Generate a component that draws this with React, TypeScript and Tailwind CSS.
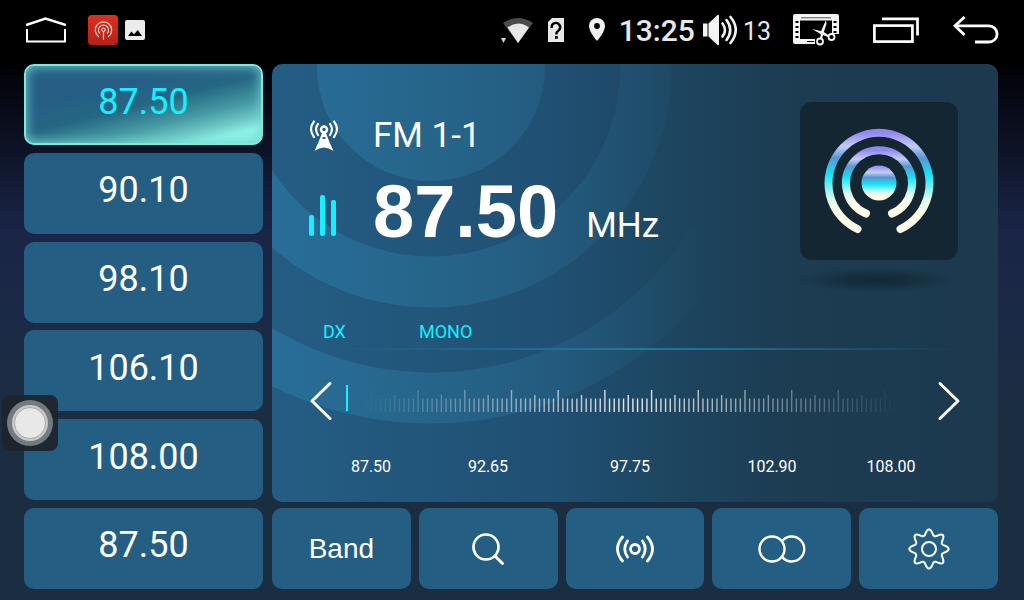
import React, { useState } from 'react'

interface Preset {
  id: number
  frequency: string
}

const PRESETS: Preset[] = [
  { id: 1, frequency: '87.50' },
  { id: 2, frequency: '90.10' },
  { id: 3, frequency: '98.10' },
  { id: 4, frequency: '106.10' },
  { id: 5, frequency: '108.00' },
  { id: 6, frequency: '87.50' }
]

const SCALE_LABELS = ['87.50', '92.65', '97.75', '102.90', '108.00']

// Outline of the settings cog: a wave with eight teeth round the centre
const GEAR_PATH =
  Array.from({ length: 192 }, (_, i) => {
    const a = (i / 192) * Math.PI * 2
    const r = 14 + 5.6 * Math.pow((1 + Math.cos(8 * a)) / 2, 1.2)
    return `${i ? 'L' : 'M'}${(21 + r * Math.sin(a)).toFixed(2)} ${(21 - r * Math.cos(a)).toFixed(2)}`
  }).join('') + 'Z'

const StatusBar = () => (
  <header className="flex h-15 items-center justify-between bg-black pr-[25px] pl-[26px] text-[#e8e8e8]">
    <div className="flex items-center">
      <button type="button" aria-label="Home" className="mr-[22px]">
        <svg width="40" height="26" viewBox="0 0 40 26" fill="none" stroke="#fff" strokeWidth="2">
          <path d="M0 8 L19.500 1.500 L40 8" strokeWidth="2.600" />
          <path d="M1 12 V24.500 H39 V12" />
        </svg>
      </button>
      <svg className="mr-[7px]" width="30" height="30" viewBox="0 0 30 30" fill="none" stroke="#f6d9d4" strokeLinecap="round">
        <defs>
          <linearGradient id="app" x1="0" y1="0" x2="0" y2="1">
            <stop offset="0" stopColor="#df2f1f" />
            <stop offset="1" stopColor="#b32218" />
          </linearGradient>
        </defs>
        <rect width="30" height="30" rx="3.500" fill="url(#app)" stroke="none" />
        <path d="M10.500 21.600 A8.200 8.200 0 1 1 20.500 21.600" strokeWidth="1.300" />
        <path d="M11.600 18.200 A5 5 0 1 1 19.400 18.200" strokeWidth="1.200" />
        <circle cx="15.500" cy="14.800" r="1.800" />
        <path d="M15.500 17 V24" strokeWidth="1.200" />
      </svg>
      <svg width="20" height="20" viewBox="0 0 20 20">
        <rect width="20" height="20" rx="2" fill="#ececec" />
        <path d="M3 16 L6.500 11.500 L9 14.200 L12.800 10 L17 16 Z" fill="#000" />
      </svg>
    </div>

    <div className="flex items-center">
      <svg className="mr-3.5" width="33" height="27" viewBox="0 0 33 27">
        <path d="M2 6 Q17 -4 32 6 L17 26 Z" fill="#4b4b4b" />
        <path d="M6.500 10.500 Q17 2.500 28 10.500 L17 26 Z" fill="#e8e8e8" />
        <path d="M0 21 H5 L2.500 26 Z" fill="#d8d8d8" />
      </svg>
      <svg className="mr-[25px]" width="16" height="26" viewBox="0 0 16 26">
        <path d="M4 1 H16 V25 H0 V5 Z" fill="#e8e8e8" />
        <path d="M3.800 11 A4.200 4.200 0 1 1 10.500 13.500 Q8.300 15 8.300 17.500" fill="none" stroke="#000" strokeWidth="2.400" />
        <rect x="7" y="19" width="2.800" height="2.800" fill="#000" />
      </svg>
      <svg className="mr-3.5" width="16" height="24" viewBox="0 0 16 24">
        <path d="M8 0 A8 8 0 0 1 16 8 C16 14 8 23 8 23 C8 23 0 14 0 8 A8 8 0 0 1 8 0 Z" fill="#f0f0f0" />
        <circle cx="8" cy="8" r="2.900" fill="#000" />
      </svg>
      <span className="mr-2 pt-0.5 text-[30px] leading-9 font-medium">13:25</span>
      <svg className="mr-1" width="36" height="32" viewBox="0 0 36 32">
        <rect x="0" y="9.500" width="4.500" height="13" fill="#f4f4f4" />
        <path d="M5.500 9.500 L14.500 1 Q16 0 16 2 V30 Q16 32 14.500 31 L5.500 22.500 Z" fill="#f4f4f4" />
        <g fill="none" stroke="#f4f4f4" strokeWidth="2.600" strokeLinecap="round">
          <path d="M19.500 9.500 Q24.500 16 19.500 22.500" />
          <path d="M23.500 6 Q31 16 23.500 26" />
          <path d="M27.500 3 Q38 16 27.500 29" />
        </g>
      </svg>
      <span className="mr-[22px] pt-1 text-[25px] leading-9">13</span>
      <button type="button" aria-label="Screenshot" className="mr-[34px]">
        <svg width="46" height="32" viewBox="0 0 46 32">
          <path d="M2 0 H44 Q46 0 46 2 V20 H39 V6.500 H7 V25 H22 V30 H2 Q0 30 0 28 V2 Q0 0 2 0 Z" fill="#f4f4f4" />
          <path d="M8 3.800 H38" stroke="#555" />
          <g fill="#000">
            <rect x="2.500" y="7" width="3" height="2" />
            <rect x="2.500" y="12" width="3" height="2" />
            <rect x="2.500" y="17" width="3" height="2" />
            <rect x="2.500" y="22" width="3" height="2" />
            <rect x="40.500" y="7" width="3" height="2" />
            <rect x="40.500" y="12" width="3" height="2" />
            <rect x="40.500" y="17" width="3" height="2" />
            <rect x="14" y="27" width="7" height="1" />
          </g>
          <path d="M19 15 L30 17.500 L36 21.500 L35 23 L28.500 20.500 Z" fill="#f4f4f4" />
          <path d="M33 6 L33.500 10 L30.500 19 L29 25 L27 24.500 L28.500 16 Z" fill="#f4f4f4" />
          <g fill="#000" stroke="#f4f4f4" strokeWidth="1.800">
            <circle cx="27" cy="27.500" r="3" />
            <circle cx="38.500" cy="23" r="3" />
          </g>
        </svg>
      </button>
      <button type="button" aria-label="Recent apps" className="mr-[34px]">
        <svg width="46" height="26" viewBox="0 0 46 26" fill="none" stroke="#fff" strokeWidth="2.700">
          <rect x="1.400" y="8.600" width="38" height="16" />
          <path d="M9 1.800 H44.500 V18.500" />
        </svg>
      </button>
      <button type="button" aria-label="Back">
        <svg width="46" height="28" viewBox="0 0 46 28" fill="none" stroke="#fff" strokeWidth="2.800">
          <path d="M11.500 1 L2 9.800 L11.500 19" />
          <path d="M2 9.800 H36 A8 8 0 0 1 36 26 H22" />
        </svg>
      </button>
    </div>
  </header>
)

const PresetButton = ({ preset, active, onSelect }: { preset: Preset; active: boolean; onSelect: (id: number) => void }) => (
  <button
    type="button"
    aria-pressed={active}
    onClick={() => onSelect(preset.id)}
    className={
      active
        ? 'h-[81px] rounded-[10px] border-2 border-[#7fe8de] bg-[linear-gradient(166deg,#265e86_30%,#256783_50%,#479aa4_68%,#6fc8c6_80%,#8df0e6_88%)] pb-1.5 text-4xl text-[#14f0ff] shadow-[inset_0_0_12px_#6fd5d0]'
        : 'h-[81px] rounded-[10px] bg-[#255e83] pb-1.5 text-4xl text-white'
    }
  >
    {preset.frequency}
  </button>
)

// Broadcast rings behind the readout
const Rings = () => (
  <svg className="absolute top-0 left-0" width="726" height="438" viewBox="0 0 726 438" fill="none" aria-hidden="true">
    <defs>
      <linearGradient id="ring" gradientUnits="userSpaceOnUse" x1="0" y1="0" x2="440" y2="0">
        <stop offset="0" stopColor="#2a7aa6" stopOpacity="0.600" />
        <stop offset="0.400" stopColor="#2a7096" stopOpacity="0.550" />
        <stop offset="1" stopColor="#2a7096" stopOpacity="0" />
      </linearGradient>
    </defs>
    <circle cx="159" cy="3" r="114" fill="url(#ring)" />
    <circle cx="159" cy="3" r="215" stroke="url(#ring)" strokeWidth="51" />
    <circle cx="159" cy="3" r="331" stroke="url(#ring)" strokeWidth="51" />
  </svg>
)

const StationLogo = () => (
  <div className="mr-10 flex flex-col items-center">
    <div className="flex size-[158px] items-center justify-center rounded-xl bg-[#132632] pt-1">
      <svg width="112" height="112" viewBox="-56 -56 112 112" fill="none" strokeLinecap="round">
        <defs>
          <linearGradient id="shine" x1="0" y1="0" x2="0" y2="1">
            <stop offset="0" stopColor="#9188ee" />
            <stop offset="0.140" stopColor="#c3cdf6" />
            <stop offset="0.260" stopColor="#5796d3" />
            <stop offset="0.440" stopColor="#14e6f6" />
            <stop offset="0.700" stopColor="#e6faec" />
            <stop offset="0.850" stopColor="#fdfbe9" />
          </linearGradient>
          <linearGradient id="shine-dot" x1="0" y1="0" x2="0" y2="1">
            <stop offset="0" stopColor="#9188ee" />
            <stop offset="0.200" stopColor="#c3cdf6" />
            <stop offset="0.340" stopColor="#5796d3" />
            <stop offset="0.540" stopColor="#14e6f6" />
            <stop offset="0.780" stopColor="#e6faec" />
            <stop offset="0.900" stopColor="#fdfbe9" />
          </linearGradient>
        </defs>
        <path d="M-21.500 46 A50.500 50.500 0 1 1 21.500 46" stroke="url(#shine)" strokeWidth="8" />
        <path d="M-13 30.500 A33 33 0 1 1 13 30.500" stroke="url(#shine)" strokeWidth="8" />
        <circle r="17.500" fill="url(#shine-dot)" />
      </svg>
    </div>
    <div className="mt-2 h-6 w-[158px] bg-[radial-gradient(closest-side,#142733,#16303f_50%,transparent)]" />
  </div>
)

// Tuning scale: one tick every 4.67px, every tenth is long and every fifth is medium
const Ruler = () => {
  const ticks = Array.from({ length: 118 }, (_, i) => ({ x: 7 + i * 4.67, n: i + 6 }))
  return (
    <svg className="mx-3 min-w-0 flex-1" height="40" viewBox="0 0 580 40" preserveAspectRatio="none" role="img" aria-label="Tuning scale">
      <rect x="1" y="4" width="2" height="26" fill="#14f0ff" />
      {ticks.map(({ x, n }) => {
        const top = n % 10 === 0 ? 9 : n % 5 === 0 ? 14 : 17.5
        const opacity = Math.max(0, 0.9 - Math.abs(x - 285) / 300)
        return <rect key={n} x={x} y={top} width="1.400" height={31 - top} fill="#fff" opacity={opacity} />
      })}
    </svg>
  )
}

const TunerPanel = ({ frequency }: { frequency: string }) => (
  <section className="relative flex-1 overflow-hidden rounded-[10px] bg-[linear-gradient(90deg,#245d84,#205073_38%,#1d455f_56%,#1c3c52_72%,#1c394e)] text-white">
    <Rings />
    <div className="relative flex justify-between pt-[38px] pl-[37px]">
      <div className="pt-3.5">
        <div className="flex h-10 items-center">
          <svg className="mr-[34px]" width="30" height="32" viewBox="0 0 30 32" fill="none" stroke="#fff" strokeWidth="2.200" strokeLinecap="round">
            <path d="M5 1.500 Q-1 9 5 17" />
            <path d="M9 4 Q5 9 9 15" />
            <path d="M25 1.500 Q31 9 25 17" />
            <path d="M21 4 Q25 9 21 15" />
            <circle cx="15" cy="9.500" r="3" strokeWidth="2.600" />
            <path d="M13 13 H17 L20 21 L24.500 31 Q15 24 5.500 31 L10 21 Z" fill="#fff" stroke="none" />
            <rect x="13.300" y="17" width="3.400" height="2" rx="1" fill="#25648c" stroke="none" />
          </svg>
          <span className="text-[35px] leading-10">FM 1-1</span>
        </div>
        <div className="mt-5 flex items-baseline">
          <svg className="mr-9" width="28" height="42" viewBox="0 0 28 42" fill="#14f0ff">
            <rect x="0" y="20" width="5" height="21" rx="2" />
            <rect x="11" y="0" width="5" height="41" rx="2" />
            <rect x="22" y="5" width="5" height="36" rx="2" />
          </svg>
          <span className="font-['Liberation_Sans',sans-serif] text-[74px] leading-[72px] font-bold">{frequency}</span>
          <span className="ml-7 text-[35px] leading-10">MHz</span>
        </div>
      </div>
      <StationLogo />
    </div>

    <div className="relative mt-7 flex pl-[51px] text-lg leading-6 text-[#14f0ff]">
      <span className="w-24">DX</span>
      <span>MONO</span>
    </div>
    <div className="relative mt-1 mr-10 ml-[60px] h-0.5 bg-[linear-gradient(90deg,transparent,#22759c_45%,#22759c_55%,transparent)]" />

    <div className="relative mt-[31px] flex items-center pr-[37px] pl-[37px]">
      <button type="button" aria-label="Tune down">
        <svg width="24" height="40" viewBox="0 0 24 40" fill="none" stroke="#fff" strokeWidth="3" strokeLinecap="round" strokeLinejoin="round">
          <path d="M21 2.500 L3 20 L21 37.500" />
        </svg>
      </button>
      <Ruler />
      <button type="button" aria-label="Tune up">
        <svg width="24" height="40" viewBox="0 0 24 40" fill="none" stroke="#fff" strokeWidth="3" strokeLinecap="round" strokeLinejoin="round">
          <path d="M3 2.500 L21 20 L3 37.500" />
        </svg>
      </button>
    </div>
    <div className="relative mt-9 mb-6 grid grid-cols-[88fr_146fr_138fr_146fr_92fr] pr-[61px] pl-[55px] text-center text-base leading-5">
      {SCALE_LABELS.map((label) => (
        <span key={label}>{label}</span>
      ))}
    </div>
  </section>
)

const ToolButton = ({ label, children }: { label: string; children: React.ReactNode }) => (
  <button type="button" aria-label={label} className="flex h-[81px] items-center justify-center rounded-[10px] bg-[#255e83] text-white">
    {children}
  </button>
)

const Toolbar = () => (
  <nav className="grid grid-cols-5 gap-2">
    <ToolButton label="Band">
      <span className="font-['Liberation_Sans',sans-serif] text-[28px]">Band</span>
    </ToolButton>
    <ToolButton label="Search">
      <svg width="34" height="34" viewBox="0 0 34 34" fill="none" stroke="currentColor" strokeWidth="2.700" strokeLinecap="round">
        <circle cx="15" cy="15" r="12.500" />
        <path d="M24 24 L31.500 31.500" strokeWidth="3" />
      </svg>
    </ToolButton>
    <ToolButton label="Stereo">
      <svg width="40" height="30" viewBox="0 0 40 30" fill="none" stroke="currentColor" strokeWidth="2.800" strokeLinecap="round">
        <circle cx="20" cy="15" r="4.500" />
        <path d="M12.500 7 Q7 15 12.500 23" />
        <path d="M7.500 3 Q-2.500 15 7.500 27" />
        <path d="M27.500 7 Q33 15 27.500 23" />
        <path d="M32.500 3 Q42.500 15 32.500 27" />
      </svg>
    </ToolButton>
    <ToolButton label="Local or distant">
      <svg width="48" height="28" viewBox="0 0 48 28" fill="none" stroke="currentColor" strokeWidth="2.400">
        <circle cx="14" cy="14" r="12.500" />
        <path d="M24.500 5.600 A12.500 12.500 0 1 1 24.500 22.400" />
      </svg>
    </ToolButton>
    <ToolButton label="Settings">
      <svg width="42" height="42" viewBox="0 0 42 42" fill="none" stroke="currentColor" strokeWidth="2" strokeLinejoin="round">
        <path d={GEAR_PATH} />
        <circle cx="21" cy="21" r="7" />
      </svg>
    </ToolButton>
  </nav>
)

export default function App() {
  const [activeId, setActiveId] = useState(1)
  const active = PRESETS.find((p) => p.id === activeId) ?? PRESETS[0]

  return (
    <div className="relative flex min-h-screen flex-col bg-[linear-gradient(180deg,#000_60px,#03040c_80px,#1a2547_230px,#1b2b45_350px,#1b2e41_420px)] font-[Roboto,sans-serif]">
      <StatusBar />
      <main className="flex flex-1 gap-[9px] pt-1 pr-[26px] pb-[11px] pl-6">
        <div className="flex w-[239px] flex-col justify-between gap-[7px]">
          {PRESETS.map((preset) => (
            <PresetButton key={preset.id} preset={preset} active={preset.id === activeId} onSelect={setActiveId} />
          ))}
        </div>
        <div className="flex min-w-0 flex-1 flex-col gap-1.5">
          <TunerPanel frequency={active.frequency} />
          <Toolbar />
        </div>
      </main>

      {/* Floating assistive button, always on top */}
      <button type="button" aria-label="Assistive touch" className="absolute top-[395px] left-0.5 flex size-14 items-center justify-center rounded-lg bg-[#1c252d]/95">
        <span className="flex size-[46px] items-center justify-center rounded-full bg-[#737b80]">
          <span className="flex size-9 items-center justify-center rounded-full bg-[#c9c9c9]">
            <span className="size-8 rounded-full border border-[#aaa] bg-[#e8e8e8]" />
          </span>
        </span>
      </button>
    </div>
  )
}
